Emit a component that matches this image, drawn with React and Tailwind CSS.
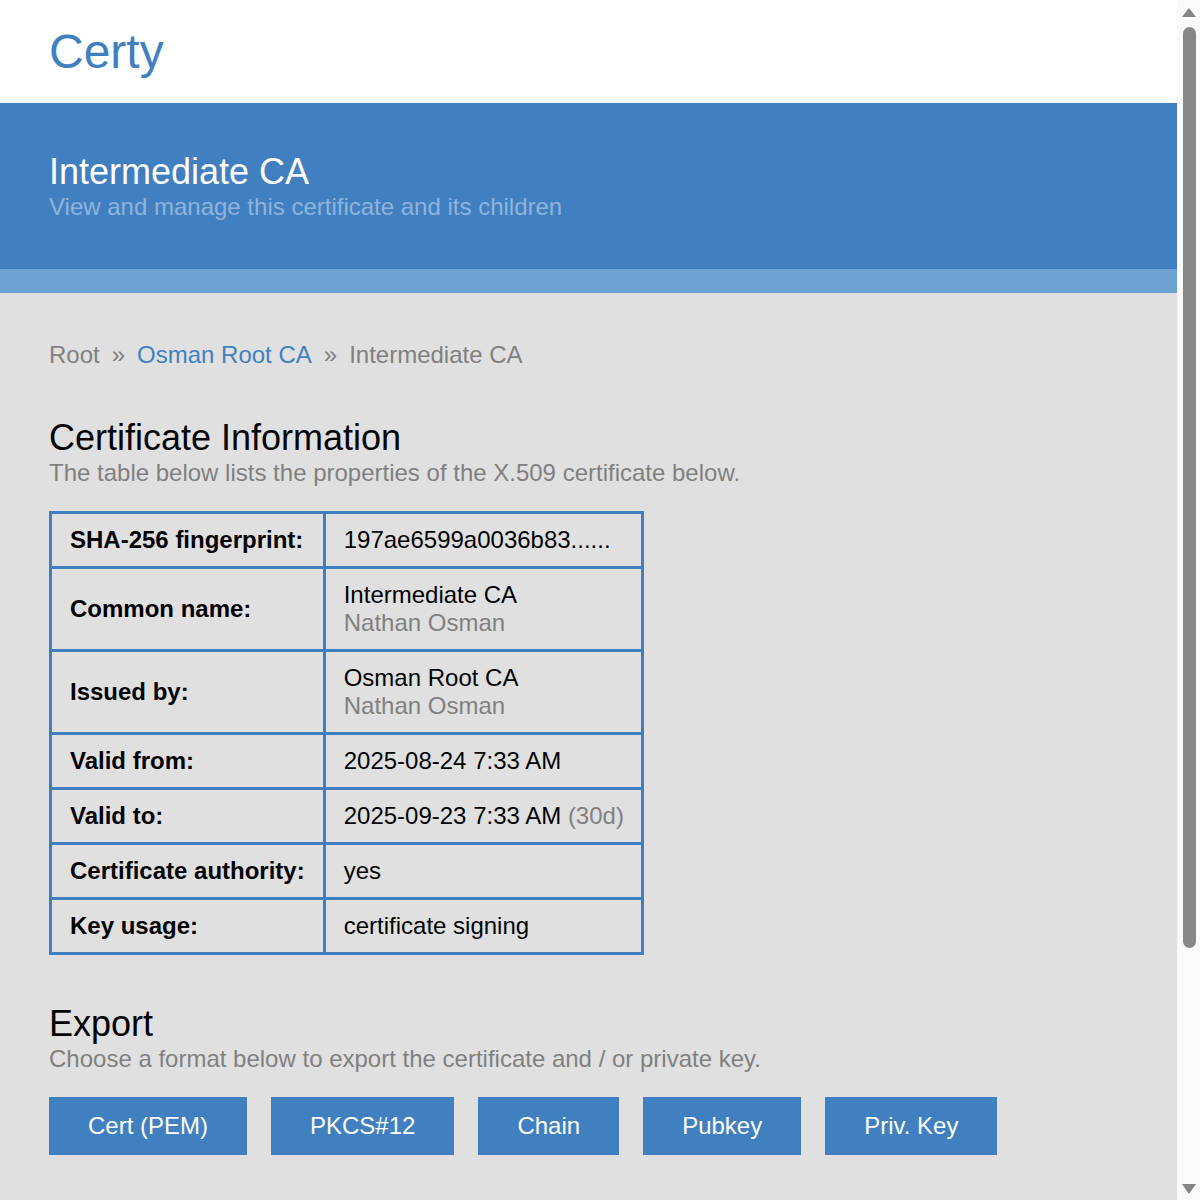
const rows = [
  { label: "SHA-256 fingerprint:", value: "197ae6599a0036b83......" },
  { label: "Common name:", value: "Intermediate CA", sub: "Nathan Osman" },
  { label: "Issued by:", value: "Osman Root CA", sub: "Nathan Osman" },
  { label: "Valid from:", value: "2025-08-24 7:33 AM" },
  { label: "Valid to:", value: "2025-09-23 7:33 AM", extra: "(30d)" },
  { label: "Certificate authority:", value: "yes" },
  { label: "Key usage:", value: "certificate signing" },
];

const exportFormats = ["Cert (PEM)", "PKCS#12", "Chain", "Pubkey", "Priv. Key"];

function SectionTitle({ title, subtitle }) {
  return (
    <div>
      <h2 className="text-[36px] leading-[1.149] text-black">{title}</h2>
      <p className="mt-px text-[24px] leading-[1.149] text-[#808080]">{subtitle}</p>
    </div>
  );
}

// window scrollbar seen at the right edge of the screenshot
function Scrollbar() {
  return (
    <div className="flex w-[23px] shrink-0 flex-col items-center bg-[#fafafa] pl-[5px] pr-[4px]">
      <svg className="mt-[8px]" width="14" height="9" viewBox="0 0 14 9">
        <polygon points="7,0 14,9 0,9" fill="#858585" />
      </svg>
      <div className="mt-[10px] h-[921px] w-[13px] rounded-full bg-[#878787]" />
      <div className="flex-1" />
      <svg className="mb-[6px]" width="14" height="10" viewBox="0 0 14 10">
        <polygon points="0,0 14,0 7,10" fill="#858585" />
      </svg>
    </div>
  );
}

export default function App() {
  return (
    <div className="flex h-screen overflow-hidden bg-[#e0e0e0] font-['Liberation_Sans',Arial,sans-serif]">
      <div className="min-w-0 flex-1 overflow-hidden">
        {/* Header */}
        <header className="bg-white px-[49px] py-6">
          <h1 className="text-[48px] leading-[1.149] text-[#4080c0]">Certy</h1>
        </header>

        {/* Banner */}
        <div className="bg-[#4080c0] px-[49px] pt-12 pb-[49px]">
          <div className="text-[36px] leading-[1.149] text-white">Intermediate CA</div>
          <div className="text-[24px] leading-[1.149] text-[#8fb3dd]">
            View and manage this certificate and its children
          </div>
        </div>
        <div className="h-6 bg-[#6fa0d2]" />

        {/* Body */}
        <main className="px-[49px] pt-12 pb-24">
          <nav className="text-[24px] leading-[1.149] text-[#808080]">
            <span>Root</span>
            <span className="mx-3">»</span>
            <a className="text-[#4080c0]">Osman Root CA</a>
            <span className="mx-3">»</span>
            <span>Intermediate CA</span>
          </nav>

          <section className="mt-12">
            <SectionTitle
              title="Certificate Information"
              subtitle="The table below lists the properties of the X.509 certificate below."
            />
            <table className="mt-6 border-collapse border-[3px] border-[#4080c0] text-[24px] leading-[28px] text-black">
              <tbody>
                {rows.map((r) => (
                  <tr key={r.label}>
                    <td className="border-[3px] border-[#4080c0] px-[18px] py-3 align-middle font-bold whitespace-nowrap">
                      {r.label}
                    </td>
                    <td className="border-[3px] border-[#4080c0] pl-[18px] pr-[17px] py-3 align-middle whitespace-nowrap">
                      <div>
                        {r.value}
                        {r.extra && <span className="text-[#808080]"> {r.extra}</span>}
                      </div>
                      {r.sub && <div className="text-[#808080]">{r.sub}</div>}
                    </td>
                  </tr>
                ))}
              </tbody>
            </table>
          </section>

          <section className="mt-12">
            <SectionTitle
              title="Export"
              subtitle="Choose a format below to export the certificate and / or private key."
            />
            <div className="mt-[25px] flex gap-6">
              {exportFormats.map((f) => (
                <button
                  key={f}
                  className="bg-[#4080c0] px-[39px] py-[15px] text-[24px] leading-[1.149] text-white"
                >
                  {f}
                </button>
              ))}
            </div>
          </section>
        </main>
      </div>
      <Scrollbar />
    </div>
  );
}
